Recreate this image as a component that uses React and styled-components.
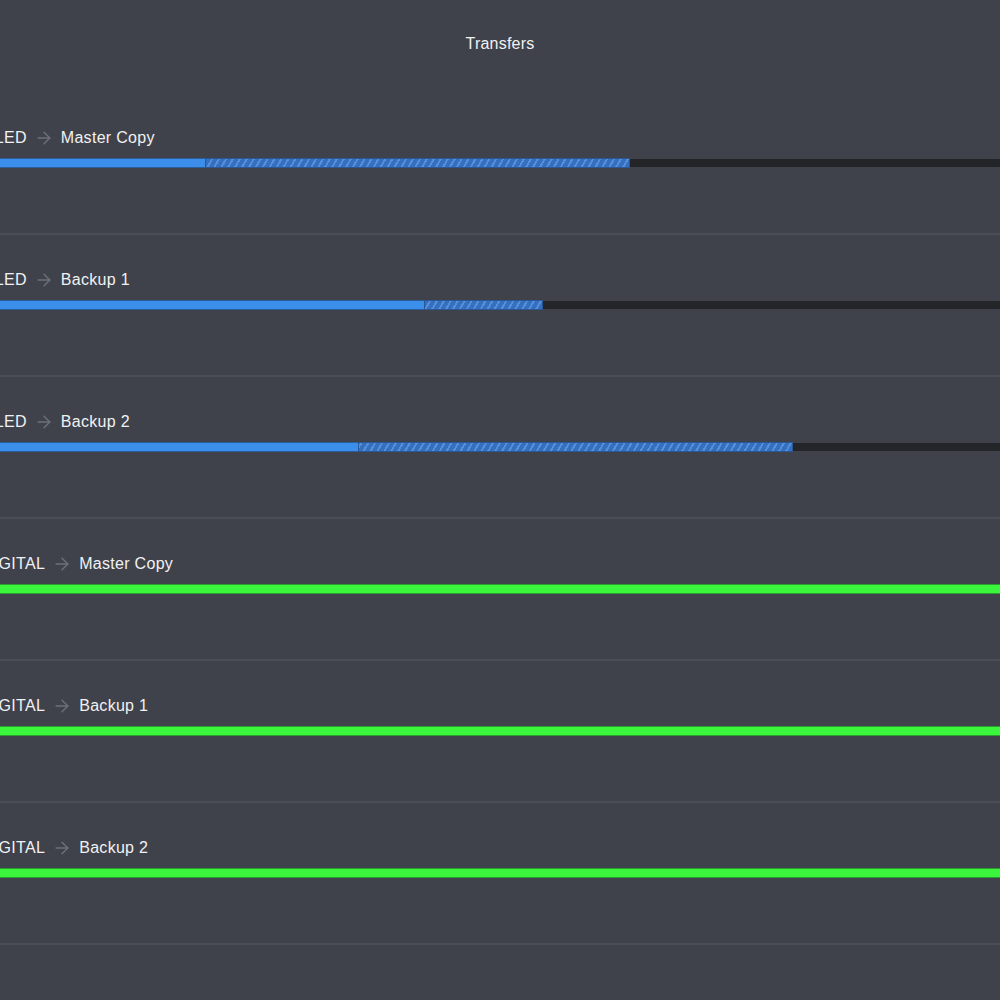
import React from 'react';
import styled, {createGlobalStyle} from 'styled-components';
import {ArrowRight} from 'lucide-react';

const GlobalStyle = createGlobalStyle`
    html, body {
        margin:0;
        padding:0;
        background:#3f424a;
        overflow:hidden;
    }
    body{
        font-family: "Liberation Sans", "Helvetica Neue", Arial, sans-serif;
        color:#f1f1f3;
    }
`;

const Page = styled.div`
    width:1000px;
    height:1000px;
    background:#3f424a;
    overflow:hidden;
`;
const Header = styled.div`
    height:93px;
    padding-top:35px;
    box-sizing:border-box;
    text-align:center;
    font-size:16px;
    line-height:18px;
    letter-spacing:0.2px;
    color:#f1f1f3;
`;
const List = styled.div`
    display:flex;
    flex-direction:column;
`;
const Row = styled.div`
    display:flex;
    flex-direction:column;
    gap:10px;
    padding:35px 0 65px 0;
    border-bottom:2px solid #4b4e57;
`;
const Label = styled.div`
    display:flex;
    align-items:center;
    gap:7px;
    margin-left:-18px;
    font-size:16px;
    line-height:20px;
    letter-spacing:0.3px;
    color:#f1f1f3;
    white-space:nowrap;
`;
const Arrow = styled(ArrowRight)`
    color:#6d7078;
    flex-shrink:0;
`;
const Track = styled.div`
    display:flex;
    margin-left:-18px;
    margin-right:-18px;
    height:8px;
    margin-top:1px;
    margin-bottom:1px;
    background:${props => props.done ? '#2fd132' : '#232529'};
`;
const Solid = styled.div`
    height:100%;
    background:${props => props.done ? '#3af53c' : '#3b8ee9'};
    box-shadow:${props => props.done
        ? '0 0 0 1px #2a9e2c'
        : '0 0 0 1px #2a5d9c'};
`;
const Striped = styled.div`
    height:100%;
    background-color:#3470bf;
    background-image:repeating-linear-gradient(
        -60deg,
        #3470bf 0px,
        #3470bf 4px,
        #568fd9 4px,
        #568fd9 6px
    );
    box-shadow:0 0 0 1px #2a5896;
`;

const transfers = [
    {id:1, source:'OLED', target:'Master Copy', solid:224, striped:423},
    {id:2, source:'OLED', target:'Backup 1', solid:443, striped:117},
    {id:3, source:'OLED', target:'Backup 2', solid:377, striped:433},
    {id:4, source:'DIGITAL', target:'Master Copy', done:true},
    {id:5, source:'DIGITAL', target:'Backup 1', done:true},
    {id:6, source:'DIGITAL', target:'Backup 2', done:true},
];

const App = () => {
    return (
        <>
            <GlobalStyle />
            <Page>
                <Header>Transfers</Header>
                <List>
                    {transfers.map(t => <Row key={t.id}>
                                            <Label>
                                                <span>{t.source}</span>
                                                <Arrow size={20} strokeWidth={1.7}/>
                                                <span>{t.target}</span>
                                            </Label>
                                            <Track done={t.done}>
                                                {t.done
                                                    ? <Solid done style={{width:'100%'}}/>
                                                    : <>
                                                        <Solid style={{width:t.solid + 'px'}}/>
                                                        <Striped style={{width:t.striped + 'px'}}/>
                                                      </>
                                                }
                                            </Track>
                                        </Row>)}
                </List>
            </Page>
        </>
    );
};

export default App;
